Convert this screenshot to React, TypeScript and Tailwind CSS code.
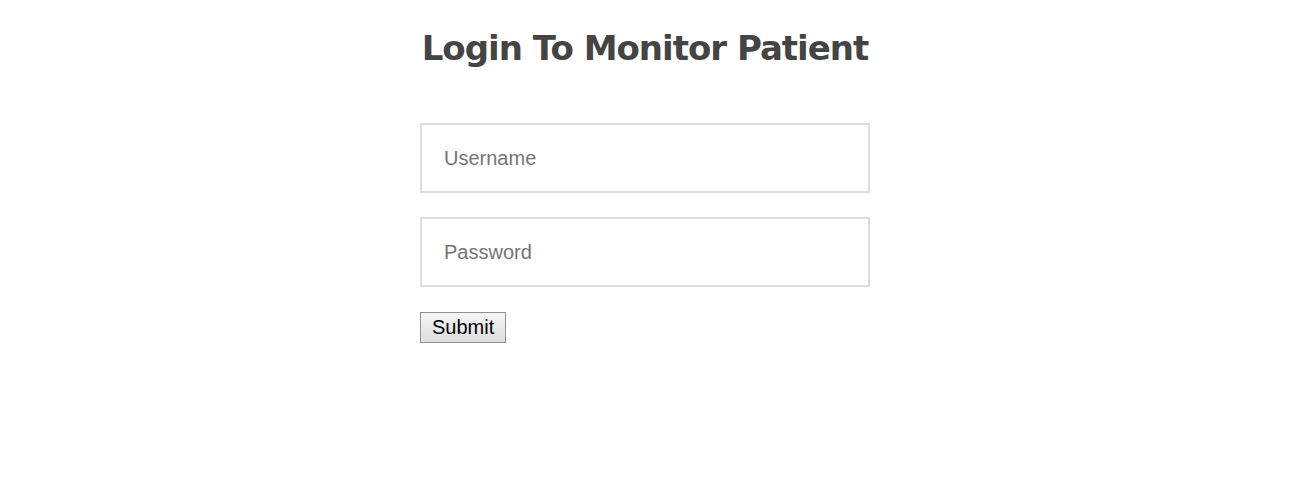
import React from 'react';

export default function App() {
  return (
    <div className="min-h-[500px] bg-white">
      <div className="ml-[420px] w-[450px] pt-[26px]">
        <h1
          className="text-center text-[34px] font-bold leading-[44px] tracking-[-1px] text-[#444444]"
          style={{ fontFamily: 'Tahoma, "DejaVu Sans", sans-serif' }}
        >
          Login To Monitor Patient
        </h1>

        <form className="mt-[53px] flex flex-col" onSubmit={(e) => e.preventDefault()}>
          <input
            type="text"
            placeholder="Username"
            className="h-[70px] w-full border-2 border-[#dddddd] px-[22px] text-[20px] text-[#333] outline-none placeholder:text-[#757575]"
            style={{ fontFamily: 'Arial, "Liberation Sans", sans-serif' }}
          />
          <input
            type="password"
            placeholder="Password"
            className="mt-[24px] h-[70px] w-full border-2 border-[#dddddd] px-[22px] text-[20px] text-[#333] outline-none placeholder:text-[#757575]"
            style={{ fontFamily: 'Arial, "Liberation Sans", sans-serif' }}
          />
          <div className="mt-[25px]">
            <button
              type="submit"
              className="h-[31px] border border-[#8f8f8f] bg-gradient-to-b from-[#f6f6f6] to-[#dedede] px-[11px] pb-[2px] text-[20px] leading-none text-black"
              style={{ fontFamily: 'Arial, "Liberation Sans", sans-serif' }}
            >
              Submit
            </button>
          </div>
        </form>
      </div>
    </div>
  );
}
